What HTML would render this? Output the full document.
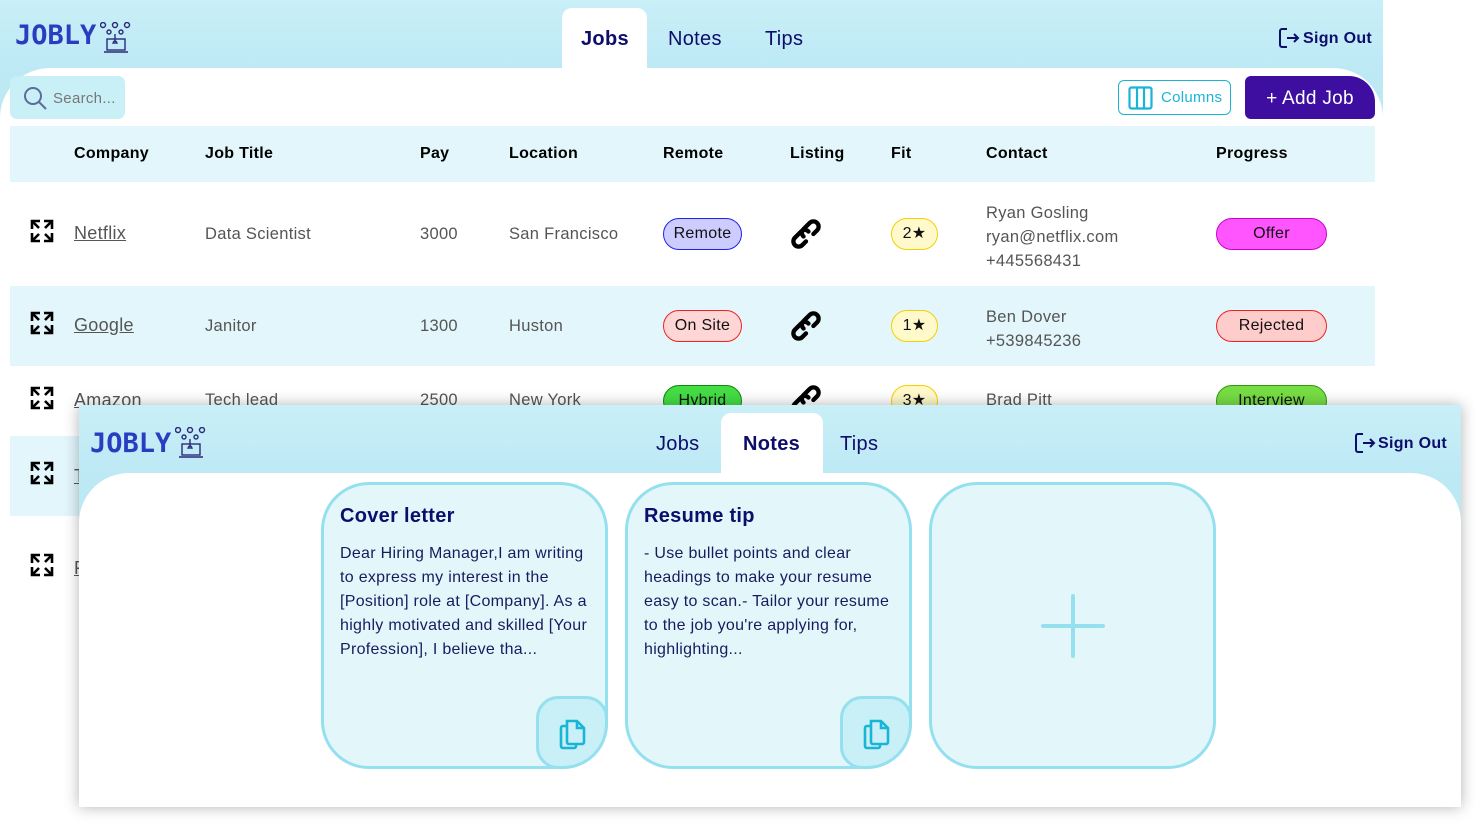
<!DOCTYPE html>
<html><head><meta charset="utf-8"><style>
*{box-sizing:border-box;margin:0;padding:0}
body{width:1483px;height:823px;background:#fff;font-family:"Liberation Sans",sans-serif;position:relative;overflow:hidden;letter-spacing:0.3px}
.app{position:absolute;left:0;top:0;width:1383px;height:823px;background:linear-gradient(#c9eff7,#bde9f5 68px,#bde9f5 130px,#fff 130px)}
.body{position:absolute;left:0;top:68px;width:1383px;height:760px;background:#fff;border-radius:50px 50px 0 0}
.logo{position:absolute;font-family:"DejaVu Sans Mono","Liberation Mono",monospace;font-size:27px;color:#2a3cbf;font-weight:bold;letter-spacing:0}
.tab{position:absolute;font-size:20px;color:#0d0d6b}
.tabact{position:absolute;background:#fff;border-radius:10px 10px 0 0}
.sign{position:absolute;font-size:16px;font-weight:bold;color:#0d0d6b}
.th{position:absolute;font-weight:bold;font-size:16px;color:#000;top:145px}
.td{position:absolute;font-size:16.5px;color:#555}
.row{position:absolute;left:10px;width:1365px;background:#e2f6fb}
.pill{position:absolute;border-radius:16px;font-size:16px;color:#111;text-align:center;line-height:30px;height:32px}
a{color:#555;text-decoration:underline}
.card{position:absolute;top:482px;width:287px;height:287px;border:3.5px solid #94e0ef;border-radius:48px;background:#e3f7fb}
.card h3{position:absolute;left:16px;top:20px;font-size:20px;color:#0d0d6b}
.card p{position:absolute;left:16px;top:57px;width:252px;font-size:16px;line-height:24px;color:#1a1a5e}
.cp{position:absolute;right:-3px;bottom:-3px;width:72px;height:73px;border:3.5px solid #94e0ef;border-radius:22px 22px 45px 22px;background:#c9eff7}
</style></head><body>
<div class="app">
<div class="body"></div>
<div class="logo" style="left:15px;top:20px">JOBLY</div>
<svg style="position:absolute;left:100px;top:22px" width="32" height="32" viewBox="0 0 32 32" fill="none" stroke="#2a2a7a" stroke-width="1.4"><circle cx="3" cy="3" r="2.5"/><circle cx="15" cy="3" r="2.5"/><circle cx="27" cy="3" r="2.5"/><circle cx="9" cy="10" r="2"/><circle cx="21" cy="10" r="2"/><rect x="7" y="17" width="18" height="11"/><path d="M4 30h24M15 12v10M13 22c0-4 4-4 4 0"/></svg>
<div class="tabact" style="left:562px;top:8px;width:85px;height:62px"></div>
<div class="tab" style="left:581px;top:28px;font-weight:bold">Jobs</div>
<div class="tab" style="left:668px;top:28px">Notes</div>
<div class="tab" style="left:765px;top:28px">Tips</div>
<svg style="position:absolute;left:1278px;top:27px" width="22" height="22" viewBox="0 0 22 22" fill="none" stroke="#0d0d6b" stroke-width="2"><path d="M9 2H4a2 2 0 0 0-2 2v14a2 2 0 0 0 2 2h5M9 11h11M16 7l4 4-4 4"/></svg>
<div class="sign" style="left:1303px;top:30px">Sign Out</div>
<div style="position:absolute;left:10px;top:76px;width:115px;height:43px;background:#c9eff7;border-radius:7px"></div>
<svg style="position:absolute;left:23px;top:86px" width="25" height="25" viewBox="0 0 25 25" fill="none" stroke="#5b6b9a" stroke-width="2"><circle cx="10" cy="10" r="8"/><path d="M16 16l7 7"/></svg>
<div style="position:absolute;left:53px;top:90px;font-size:15px;color:#777">Search...</div>
<div style="position:absolute;left:1118px;top:80px;width:113px;height:35px;border:1.5px solid #1ab5d6;border-radius:6px"></div>
<svg style="position:absolute;left:1128px;top:86px" width="25" height="24" viewBox="0 0 25 24" fill="none" stroke="#1ab5d6" stroke-width="2.2"><rect x="1.5" y="1.5" width="22" height="21" rx="2"/><path d="M9 2v20M16 2v20"/></svg>
<div style="position:absolute;left:1161px;top:89px;font-size:15px;color:#1ab5d6">Columns</div>
<div style="position:absolute;left:1245px;top:76px;width:130px;height:43px;background:#3d0ea0;border-radius:6px;border-top-right-radius:26px;color:#fff;font-size:19px;line-height:45px;text-align:center">+ Add Job</div>
<div class="row" style="top:126px;height:56px"></div>
<div class="th" style="left:74px">Company</div><div class="th" style="left:205px">Job Title</div><div class="th" style="left:420px">Pay</div><div class="th" style="left:509px">Location</div><div class="th" style="left:663px">Remote</div><div class="th" style="left:790px">Listing</div><div class="th" style="left:891px">Fit</div><div class="th" style="left:986px">Contact</div><div class="th" style="left:1216px">Progress</div>
<div class="row" style="top:286px;height:80px"></div>
<div class="row" style="top:436px;height:80px"></div>
<div class="td" style="left:74px;top:223px;font-size:18px"><a>Netflix</a></div><div class="td" style="left:205px;top:225px">Data Scientist</div><div class="td" style="left:420px;top:225px">3000</div><div class="td" style="left:509px;top:225px">San Francisco</div>
<div class="pill" style="left:663px;top:218px;width:79px;background:#ccccff;border:1px solid #2222ee">Remote</div>
<div class="pill" style="left:891px;top:218px;width:47px;background:#fff9cc;border:1px solid #f5d000">2★</div>
<div class="td" style="left:986px;top:201px;line-height:24px">Ryan Gosling<br>ryan@netflix.com<br>+445568431</div>
<div class="pill" style="left:1216px;top:218px;width:111px;background:#ff55ff;border:1px solid #cc00cc">Offer</div>
<div class="td" style="left:74px;top:315px;font-size:18px"><a>Google</a></div><div class="td" style="left:205px;top:317px">Janitor</div><div class="td" style="left:420px;top:317px">1300</div><div class="td" style="left:509px;top:317px">Huston</div>
<div class="pill" style="left:663px;top:310px;width:79px;background:#ffd6d6;border:1px solid #ee2222">On Site</div>
<div class="pill" style="left:891px;top:310px;width:47px;background:#fff9cc;border:1px solid #f5d000">1★</div>
<div class="td" style="left:986px;top:305px;line-height:24px">Ben Dover<br>+539845236</div>
<div class="pill" style="left:1216px;top:310px;width:111px;background:#ffcccc;border:1px solid #ee2222">Rejected</div>
<div class="td" style="left:74px;top:390px;font-size:18px"><a>Amazon</a></div><div class="td" style="left:205px;top:391px">Tech lead</div><div class="td" style="left:420px;top:391px">2500</div><div class="td" style="left:509px;top:391px">New York</div>
<div class="pill" style="left:663px;top:385px;width:79px;background:#44dd44;border:1px solid #118811">Hybrid</div>
<div class="pill" style="left:891px;top:385px;width:47px;background:#fff9cc;border:1px solid #f5d000">3★</div>
<div class="td" style="left:986px;top:391px">Brad Pitt</div>
<div class="pill" style="left:1216px;top:385px;width:111px;background:#77dd44;border:1px solid #339911">Interview</div>
<div class="td" style="left:74px;top:466px;font-size:18px"><a>T</a></div>
<div class="td" style="left:74px;top:558px;font-size:18px"><a>F</a></div>
<svg width="0" height="0" style="position:absolute"><defs><g id="ex" fill="none" stroke="#000" stroke-width="2.6"><path d="M2 10V2h8M2 2l7 7M22 10V2h-8M22 2l-7 7M2 14v8h8M2 22l7-7M22 14v8h-8M22 22l-7-7"/></g><g id="lk" fill="none" stroke="#000" stroke-width="3.5" stroke-linecap="round"><path d="M13 19l-3 3a4 4 0 0 1-6-6l5-5a4 4 0 0 1 6 0"/><path d="M19 13l3-3a4 4 0 0 0-6-6l-5 5a4 4 0 0 0 0 6"/></g></defs></svg>
<svg style="position:absolute;left:30px;top:219px" width="24" height="24"><use href="#ex"/></svg>
<svg style="position:absolute;left:30px;top:311px" width="24" height="24"><use href="#ex"/></svg>
<svg style="position:absolute;left:30px;top:386px" width="24" height="24"><use href="#ex"/></svg>
<svg style="position:absolute;left:30px;top:461px" width="24" height="24"><use href="#ex"/></svg>
<svg style="position:absolute;left:30px;top:553px" width="24" height="24"><use href="#ex"/></svg>
<svg style="position:absolute;left:790px;top:218px" width="32" height="32" viewBox="0 0 26 26"><use href="#lk"/></svg>
<svg style="position:absolute;left:790px;top:310px" width="32" height="32" viewBox="0 0 26 26"><use href="#lk"/></svg>
<svg style="position:absolute;left:790px;top:384px" width="32" height="32" viewBox="0 0 26 26"><use href="#lk"/></svg>
</div>
<div style="position:absolute;left:79px;top:405px;width:1382px;height:402px;background:#fff;box-shadow:0 0 14px rgba(0,0,0,0.3);overflow:hidden">
<div style="position:absolute;left:0;top:0;width:1382px;height:130px;background:linear-gradient(#c9eff7,#bde9f5 68px)"></div>
<div style="position:absolute;left:0;top:68px;width:1382px;height:340px;background:#fff;border-radius:50px 50px 0 0"></div>
<div class="logo" style="left:11px;top:23px">JOBLY</div>
<svg style="position:absolute;left:96px;top:22px" width="32" height="32" viewBox="0 0 32 32" fill="none" stroke="#2a2a7a" stroke-width="1.4"><circle cx="3" cy="3" r="2.5"/><circle cx="15" cy="3" r="2.5"/><circle cx="27" cy="3" r="2.5"/><circle cx="9" cy="10" r="2"/><circle cx="21" cy="10" r="2"/><rect x="7" y="17" width="18" height="11"/><path d="M4 30h24M15 12v10M13 22c0-4 4-4 4 0"/></svg>
<div class="tabact" style="left:642px;top:8px;width:102px;height:62px"></div>
<div class="tab" style="left:577px;top:28px">Jobs</div>
<div class="tab" style="left:664px;top:28px;font-weight:bold">Notes</div>
<div class="tab" style="left:761px;top:28px">Tips</div>
<svg style="position:absolute;left:1275px;top:27px" width="22" height="22" viewBox="0 0 22 22" fill="none" stroke="#0d0d6b" stroke-width="2"><path d="M9 2H4a2 2 0 0 0-2 2v14a2 2 0 0 0 2 2h5M9 11h11M16 7l4 4-4 4"/></svg>
<div class="sign" style="left:1299px;top:30px">Sign Out</div>
</div>
<div class="card" style="left:321px"><h3>Cover letter</h3><p>Dear Hiring Manager,I am writing to express my interest in the [Position] role at [Company]. As a highly motivated and skilled [Your Profession], I believe tha...</p><div class="cp"><svg style="position:absolute;left:19px;top:18px" width="30" height="34" viewBox="0 0 30 34" fill="none" stroke="#1ab5d6" stroke-width="2.6"><path d="M9 4h10l7 7v14a2 2 0 0 1-2 2H11a2 2 0 0 1-2-2zM19 4v7h7"/><path d="M9 9H5a2 2 0 0 0-2 2v18a2 2 0 0 0 2 2h11a2 2 0 0 0 2-2v-2"/></svg></div></div>
<div class="card" style="left:625px"><h3>Resume tip</h3><p>- Use bullet points and clear headings to make your resume easy to scan.- Tailor your resume to the job you're applying for, highlighting...</p><div class="cp"><svg style="position:absolute;left:19px;top:18px" width="30" height="34" viewBox="0 0 30 34" fill="none" stroke="#1ab5d6" stroke-width="2.6"><path d="M9 4h10l7 7v14a2 2 0 0 1-2 2H11a2 2 0 0 1-2-2zM19 4v7h7"/><path d="M9 9H5a2 2 0 0 0-2 2v18a2 2 0 0 0 2 2h11a2 2 0 0 0 2-2v-2"/></svg></div></div>
<div class="card" style="left:929px"><svg style="position:absolute;left:108px;top:108px" width="66" height="66" viewBox="0 0 66 66" stroke="#94e0ef" stroke-width="4" stroke-linecap="round"><path d="M33 3v60M3 33h60"/></svg></div>
</body></html>
